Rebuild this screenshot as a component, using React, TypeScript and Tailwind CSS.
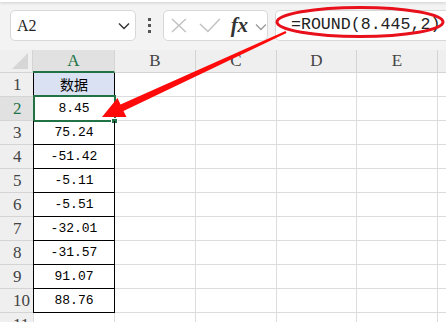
import React from 'react'

const cols = [
  { name: 'A', w: 'w-[82px]' },
  { name: 'B', w: 'w-[81px]' },
  { name: 'C', w: 'w-[81px]' },
  { name: 'D', w: 'w-[80px]' },
  { name: 'E', w: 'w-[81px]' },
  { name: '', w: 'w-[40px]' },
]

const values = ['数据', '8.45', '75.24', '-51.42', '-5.11', '-5.51', '-32.01', '-31.57', '91.07', '88.76', '']

function Toolbar() {
  return (
    <div className="h-[50px] bg-[#f3f3f3]">
      <div className="h-[2px] bg-white shadow-[0_1px_3px_rgba(0,0,0,0.18)]" />
      <div className="flex items-start pl-[10px] pt-[8px]">
        <div className="flex h-[31px] w-[126px] items-center justify-between rounded-[5px] border border-[#d8d8d8] bg-white pl-[6px] pr-[5px]">
          <span className="font-['Liberation_Serif',serif] text-[16px] text-[#222]">A2</span>
          <svg width="12" height="8" viewBox="0 0 12 8">
            <polyline points="1,1.5 6,6.5 11,1.5" fill="none" stroke="#333" strokeWidth="1.4" />
          </svg>
        </div>
        <div className="flex h-[31px] w-[27px] flex-col items-center justify-center gap-[3px]">
          <span className="h-[3px] w-[3px] bg-[#555]" />
          <span className="h-[3px] w-[3px] bg-[#555]" />
          <span className="h-[3px] w-[3px] bg-[#555]" />
        </div>
        <div className="flex h-[31px] w-[105px] items-center rounded-[5px] border border-[#d8d8d8] bg-white pl-[7px]">
          <svg width="16" height="15" viewBox="0 0 16 15">
            <path d="M1 1 L15 14 M15 1 L1 14" stroke="#c2c2c2" strokeWidth="1.5" />
          </svg>
          <svg width="22" height="15" viewBox="0 0 22 15" className="ml-[12px]">
            <polyline points="1,6 9,13.5 21,1" fill="none" stroke="#c2c2c2" strokeWidth="1.5" />
          </svg>
          <span className="ml-[10px] font-['Liberation_Serif',serif] text-[21px] font-bold italic leading-none text-[#333]">
            fx
          </span>
          <svg width="12" height="8" viewBox="0 0 12 8" className="ml-[7px] mt-[2px]">
            <polyline points="1,1.5 6,6.5 11,1.5" fill="none" stroke="#999" strokeWidth="1.3" />
          </svg>
        </div>
        <div className="-mr-[10px] ml-[7px] flex h-[31px] flex-1 items-center rounded-l-[5px] border border-r-0 border-[#d8d8d8] bg-white pl-[15px]">
          <span className="font-['Liberation_Mono',monospace] text-[16.6px] text-[#222]">=ROUND(8.445,2)</span>
        </div>
      </div>
    </div>
  )
}

function HeaderRow() {
  return (
    <div className="flex h-[23px] bg-[#efefef]">
      <div className="relative w-[33px] shrink-0 border-b border-r border-[#d4d4d4]">
        <svg width="18" height="17" viewBox="0 0 18 17" className="absolute bottom-[2px] right-[2px]">
          <polygon points="0,16 16,16 16,0" fill="#d6d6d6" />
        </svg>
      </div>
      {cols.map((c, i) =>
        c.name === 'A' ? (
          <div
            key={i}
            className={`${c.w} flex shrink-0 items-center justify-center border-b-2 border-r border-b-[#217346] border-r-[#d4d4d4] bg-[#e1e1e1] font-['Liberation_Serif',serif] text-[17px] text-[#217346]`}
          >
            {c.name}
          </div>
        ) : (
          <div
            key={i}
            className={`${c.w} flex shrink-0 items-center justify-center border-b border-r border-[#d4d4d4] font-['Liberation_Serif',serif] text-[17px] text-[#444]`}
          >
            {c.name}
          </div>
        )
      )}
    </div>
  )
}

function Row({ n, value }: { n: number; value: string }) {
  const selected = n === 2
  const hasData = n <= 10
  return (
    <div className="flex h-[24px]">
      <div
        className={`flex w-[33px] shrink-0 items-center border-b border-[#d4d4d4] pl-[13px] font-['Liberation_Serif',serif] text-[17px] ${
          selected ? 'bg-[#e1e1e1] text-[#217346]' : 'bg-[#efefef] text-[#444]'
        }`}
      >
        {n}
      </div>
      <div
        className={`relative flex w-[82px] shrink-0 items-center justify-center ${
          hasData ? 'border-b border-l border-r border-black' : 'border-l border-r border-[#dcdcdc]'
        } ${n === 1 ? "bg-[#d9e1f2] font-['Noto_Sans_CJK_SC',sans-serif] text-[14px]" : "font-['Liberation_Mono',monospace] text-[13px]"} text-black`}
      >
        {value}
        {selected && (
          <>
            <div className="absolute -bottom-[2px] -left-[1px] -right-[2px] -top-[2px] border-2 border-[#217346]" />
            <div className="absolute -bottom-[4px] -right-[4px] h-[6px] w-[7px] border border-white bg-[#217346]" />
          </>
        )}
      </div>
      {cols.slice(1).map((c, i) => (
        <div key={i} className={`${c.w} shrink-0 border-b border-r border-[#dcdcdc]`} />
      ))}
    </div>
  )
}

export default function App() {
  return (
    <div className="relative h-[322px] w-[446px] overflow-hidden bg-white">
      <Toolbar />
      <HeaderRow />
      {values.map((v, i) => (
        <Row key={i} n={i + 1} value={v} />
      ))}
      <svg width="446" height="322" viewBox="0 0 446 322" className="pointer-events-none absolute left-0 top-0">
        <ellipse cx="360" cy="22" rx="83" ry="14.5" fill="none" stroke="#e8101a" strokeWidth="3" />
        <polygon
          points="102,117 117.5,98 120.5,104.6 285.5,30.9 286.5,33.1 123.5,111 126.5,117"
          fill="#ff0a0a"
        />
      </svg>
    </div>
  )
}
